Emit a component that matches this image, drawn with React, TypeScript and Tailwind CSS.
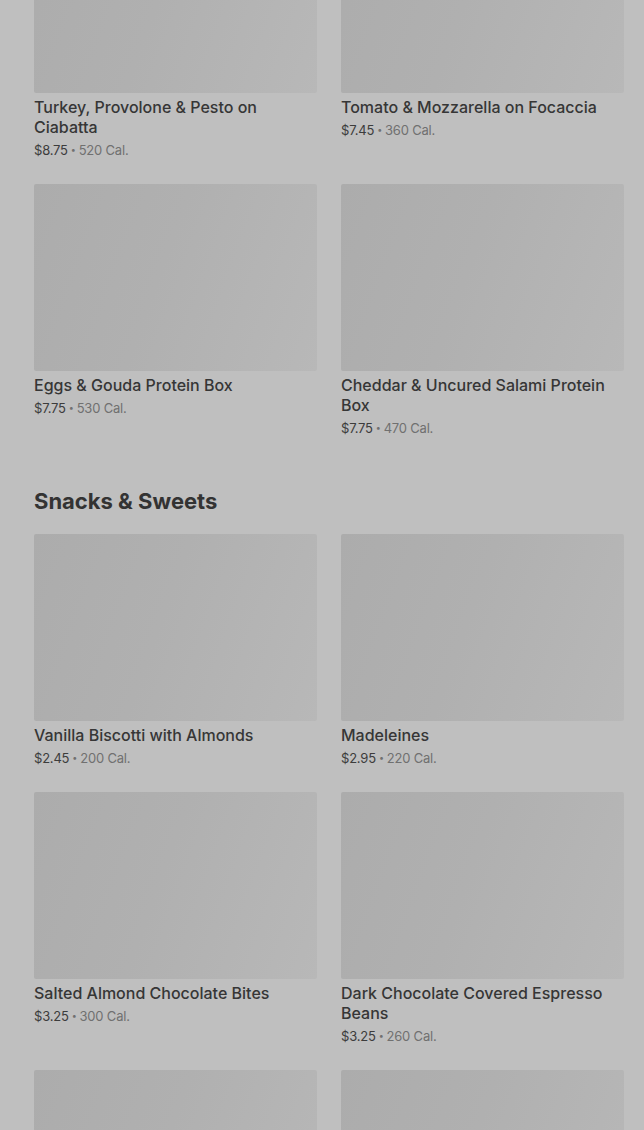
import React from 'react'

interface Item {
  name: string
  price: string
  cal: number
}

const sandwiches: Item[] = [
  { name: 'Turkey, Provolone & Pesto on Ciabatta', price: '$8.75', cal: 520 },
  { name: 'Tomato & Mozzarella on Focaccia', price: '$7.45', cal: 360 },
  { name: 'Eggs & Gouda Protein Box', price: '$7.75', cal: 530 },
  { name: 'Cheddar & Uncured Salami Protein Box', price: '$7.75', cal: 470 },
]

const snacks: Item[] = [
  { name: 'Vanilla Biscotti with Almonds', price: '$2.45', cal: 200 },
  { name: 'Madeleines', price: '$2.95', cal: 220 },
  { name: 'Salted Almond Chocolate Bites', price: '$3.25', cal: 300 },
  { name: 'Dark Chocolate Covered Espresso Beans', price: '$3.25', cal: 260 },
  { name: 'Petite Vanilla Bean Scone', price: '$1.95', cal: 120 },
  { name: 'Chocolate Chip Cookie', price: '$2.95', cal: 360 },
]

function Card({ item }: { item: Item }) {
  return (
    <div className="flex flex-col">
      <div className="h-[187px] w-full rounded-[2px] bg-[linear-gradient(110deg,#acacac_0%,#b0b0b0_45%,#b8b8b8_100%)]" />
      <div className="mt-[4px] text-[16px] leading-5 font-medium text-[#363636]">{item.name}</div>
      <div className="mt-[4px] text-[13px] leading-[18px] text-[#707070] tracking-[-0.2px]">
        <span className="text-[#3c3c3c]">{item.price}</span>
        <span className="mx-[3px] text-[9px] align-[2px]">•</span>
        <span>{item.cal} Cal.</span>
      </div>
    </div>
  )
}

export default function App() {
  return (
    <div
      className="h-[1130px] overflow-hidden bg-[#bfbfbf]"
      style={{ fontFamily: 'Inter, "Liberation Sans", sans-serif' }}
    >
      {/* page is scrolled: first row's photos sit partly above the fold */}
      <div className="-mt-[94px] pl-[34px] pr-[20px]">
        <section className="pb-[50px]">
          <div className="grid grid-cols-2 gap-x-6 gap-y-[25px]">
            {sandwiches.map(s => <Card key={s.name} item={s} />)}
          </div>
        </section>
        <section>
          <h2 className="text-[22px] leading-7 font-bold text-[#333] mb-[19px]">Snacks &amp; Sweets</h2>
          <div className="grid grid-cols-2 gap-x-6 gap-y-[25px]">
            {snacks.map(s => <Card key={s.name} item={s} />)}
          </div>
        </section>
      </div>
    </div>
  )
}
